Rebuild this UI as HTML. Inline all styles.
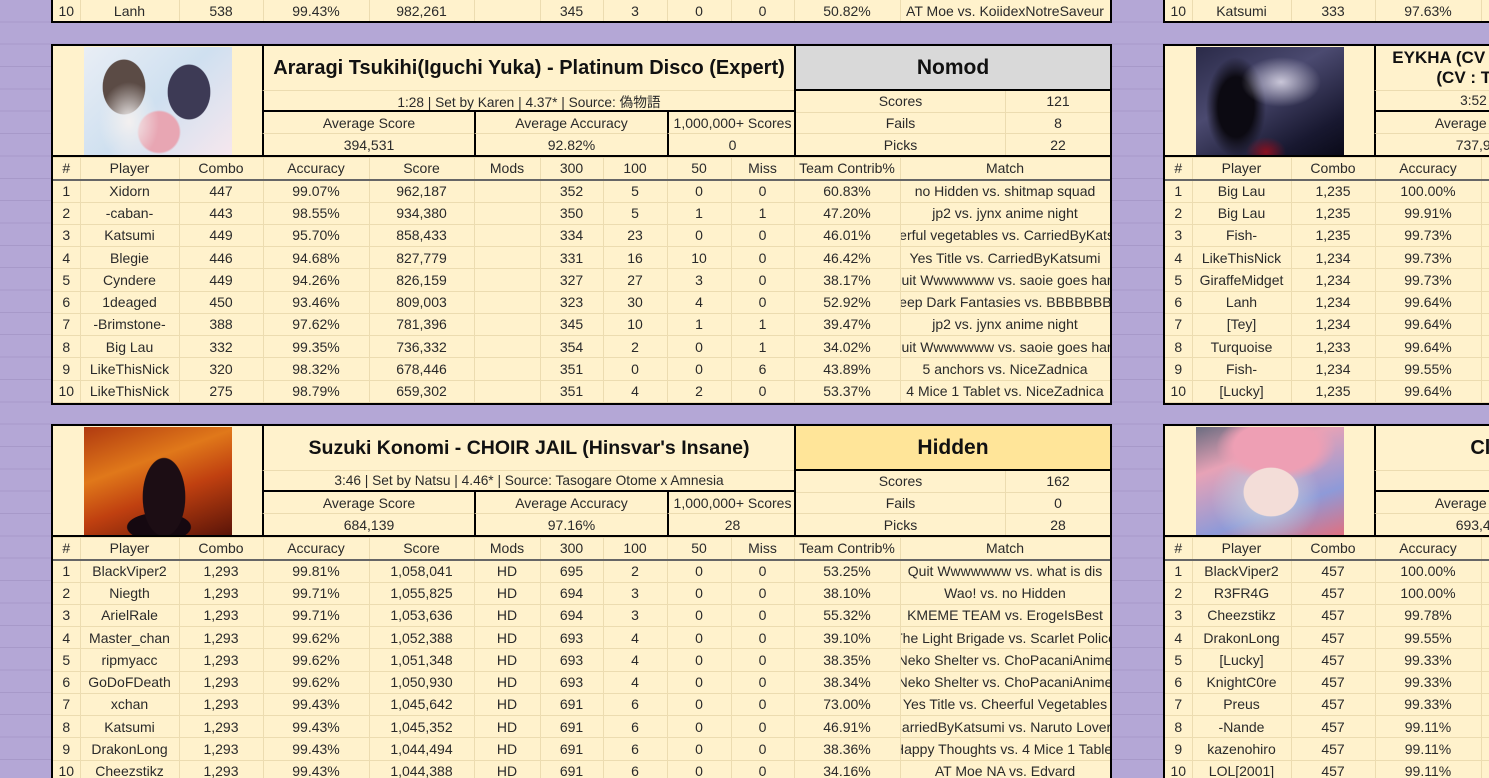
<!DOCTYPE html>
<html><head><meta charset="utf-8">
<style>
*{margin:0;padding:0}
html,body{width:1489px;height:778px;overflow:hidden}
body{position:relative;font-family:"Liberation Sans","Noto Sans CJK JP",sans-serif;color:#2a2a2a;font-size:14px;
background-color:#b4a7d6;background-image:repeating-linear-gradient(to bottom,transparent 0,transparent 21.35px,#a799c9 21.35px,#a799c9 22.35px);}
#w{position:absolute;left:0;top:0;width:1489px;height:778px;overflow:hidden}
.pn{position:absolute;border:2px solid #000;background:#fff2cc;box-sizing:border-box;width:1061px;height:361px;overflow:hidden}
.c{position:absolute;display:flex;align-items:center;justify-content:center;white-space:nowrap;overflow:hidden;box-sizing:border-box}
.ti{left:209px;top:0;width:534px;height:44px;border-left:2px solid #000;border-right:2px solid #000;font-weight:bold;font-size:20px;color:#111}
.sb{left:209px;top:44px;width:534px;height:22px;border-left:2px solid #000;border-right:2px solid #000;border-top:1px solid #ecdcb0;border-bottom:2px solid #000;font-size:13.7px}
.al{top:66px;height:22px;border-left:2px solid #000;border-bottom:1px solid #ecdcb0}
.av{top:88px;height:21px;border-left:2px solid #000}
.mh{left:743px;top:0;width:314px;height:45px;border-bottom:2px solid #000;font-weight:bold;font-size:21px;color:#111}
.sl{left:743px;width:210px;height:21.5px;border-bottom:1px solid #ecdcb0;border-right:1px solid #ecdcb0}
.sv{left:953px;width:104px;height:21.5px;border-bottom:1px solid #ecdcb0}
.ln{position:absolute;left:0;top:109px;width:1057px;height:2px;background:#000}
.im{position:absolute;left:31px;top:1px;width:148px;height:108px}
table{position:absolute;left:0;top:111px;width:1057px;border-collapse:collapse;table-layout:fixed}
tr{height:22.25px}
td{padding:0;border:1px solid #ecdcb0;text-align:center;white-space:nowrap;overflow:hidden;font-size:14px;line-height:18px}
tr.h td{border-bottom:2px solid #666}
td:first-child{border-left:none}
td div{display:flex;justify-content:center;white-space:nowrap}
.tp{position:absolute;background:#fff2cc;border:2px solid #000;border-top:none;box-sizing:border-box;height:24px;overflow:hidden}
</style></head><body><div id="w">

<div class="tp" style="left:51px;top:-1px;width:1061px">
<table style="top:0"><colgroup><col style="width:27px"><col style="width:99px"><col style="width:84px"><col style="width:106px"><col style="width:105px"><col style="width:66px"><col style="width:63px"><col style="width:64px"><col style="width:64px"><col style="width:63px"><col style="width:106px"><col style="width:210px"></colgroup>
<tr><td>10</td><td>Lanh</td><td>538</td><td>99.43%</td><td>982,261</td><td></td><td>345</td><td>3</td><td>0</td><td>0</td><td>50.82%</td><td><div>AT Moe vs. KoiidexNotreSaveur</div></td></tr></table></div>
<div class="tp" style="left:1163px;top:-1px;width:1061px">
<table style="top:0"><colgroup><col style="width:27px"><col style="width:99px"><col style="width:84px"><col style="width:106px"><col style="width:105px"><col style="width:66px"><col style="width:63px"><col style="width:64px"><col style="width:64px"><col style="width:63px"><col style="width:106px"><col style="width:210px"></colgroup>
<tr><td>10</td><td>Katsumi</td><td>333</td><td>97.63%</td><td></td><td></td><td></td><td></td><td></td><td></td><td></td><td></td></tr></table></div>

<div class="pn" style="left:51px;top:44px">
<div class="im" style="background:radial-gradient(ellipse 30px 40px at 45px 75px,#f3f0f0,transparent),radial-gradient(ellipse 35px 45px at 40px 40px,#5b4b45 60%,transparent 62%),radial-gradient(ellipse 35px 45px at 105px 45px,#3d3a55 60%,transparent 62%),radial-gradient(circle at 75px 85px,#e8a6b3 20px,transparent 22px),linear-gradient(135deg,#e9eef5,#cfe0f0 50%,#f6e7ee)"></div>
<div class="c ti">Araragi Tsukihi(Iguchi Yuka) - Platinum Disco (Expert)</div>
<div class="c sb">1:28 | Set by Karen | 4.37* | Source: 偽物語</div>
<div class="c al" style="left:209px;width:212px">Average Score</div>
<div class="c av" style="left:209px;width:212px">394,531</div>
<div class="c al" style="left:421px;width:193px">Average Accuracy</div>
<div class="c av" style="left:421px;width:193px">92.82%</div>
<div class="c al" style="left:614px;width:129px">1,000,000+ Scores</div>
<div class="c av" style="left:614px;width:129px">0</div>
<div class="c mh" style="background:#d9d9d9">Nomod</div>
<div class="c sl" style="top:45px">Scores</div><div class="c sv" style="top:45px">121</div>
<div class="c sl" style="top:66.5px">Fails</div><div class="c sv" style="top:66.5px">8</div>
<div class="c sl" style="top:88px;border-bottom:none">Picks</div><div class="c sv" style="top:88px;border-bottom:none">22</div>
<div style="position:absolute;left:741px;top:0;width:2px;height:110px;background:#000"></div>
<div class="ln"></div>
<table><colgroup><col style="width:27px"><col style="width:99px"><col style="width:84px"><col style="width:106px"><col style="width:105px"><col style="width:66px"><col style="width:63px"><col style="width:64px"><col style="width:64px"><col style="width:63px"><col style="width:106px"><col style="width:210px"></colgroup>
<tr class="h"><td>#</td><td>Player</td><td>Combo</td><td>Accuracy</td><td>Score</td><td>Mods</td><td>300</td><td>100</td><td>50</td><td>Miss</td><td>Team Contrib%</td><td>Match</td></tr>
<tr><td>1</td><td>Xidorn</td><td>447</td><td>99.07%</td><td>962,187</td><td></td><td>352</td><td>5</td><td>0</td><td>0</td><td>60.83%</td><td><div>no Hidden vs. shitmap squad</div></td></tr>
<tr><td>2</td><td>-caban-</td><td>443</td><td>98.55%</td><td>934,380</td><td></td><td>350</td><td>5</td><td>1</td><td>1</td><td>47.20%</td><td><div>jp2 vs. jynx anime night</div></td></tr>
<tr><td>3</td><td>Katsumi</td><td>449</td><td>95.70%</td><td>858,433</td><td></td><td>334</td><td>23</td><td>0</td><td>0</td><td>46.01%</td><td><div>Cheerful vegetables vs. CarriedByKatsumi</div></td></tr>
<tr><td>4</td><td>Blegie</td><td>446</td><td>94.68%</td><td>827,779</td><td></td><td>331</td><td>16</td><td>10</td><td>0</td><td>46.42%</td><td><div>Yes Title vs. CarriedByKatsumi</div></td></tr>
<tr><td>5</td><td>Cyndere</td><td>449</td><td>94.26%</td><td>826,159</td><td></td><td>327</td><td>27</td><td>3</td><td>0</td><td>38.17%</td><td><div>Quit Wwwwwww vs. saoie goes hard</div></td></tr>
<tr><td>6</td><td>1deaged</td><td>450</td><td>93.46%</td><td>809,003</td><td></td><td>323</td><td>30</td><td>4</td><td>0</td><td>52.92%</td><td><div>Deep Dark Fantasies vs. BBBBBBBB</div></td></tr>
<tr><td>7</td><td>-Brimstone-</td><td>388</td><td>97.62%</td><td>781,396</td><td></td><td>345</td><td>10</td><td>1</td><td>1</td><td>39.47%</td><td><div>jp2 vs. jynx anime night</div></td></tr>
<tr><td>8</td><td>Big Lau</td><td>332</td><td>99.35%</td><td>736,332</td><td></td><td>354</td><td>2</td><td>0</td><td>1</td><td>34.02%</td><td><div>Quit Wwwwwww vs. saoie goes hard</div></td></tr>
<tr><td>9</td><td>LikeThisNick</td><td>320</td><td>98.32%</td><td>678,446</td><td></td><td>351</td><td>0</td><td>0</td><td>6</td><td>43.89%</td><td><div>5 anchors vs. NiceZadnica</div></td></tr>
<tr><td>10</td><td>LikeThisNick</td><td>275</td><td>98.79%</td><td>659,302</td><td></td><td>351</td><td>4</td><td>2</td><td>0</td><td>53.37%</td><td><div>4 Mice 1 Tablet vs. NiceZadnica</div></td></tr>
</table></div>

<div class="pn" style="left:51px;top:424px;height:400px">
<div class="im" style="background:radial-gradient(ellipse 30px 55px at 80px 70px,#1c0d14 70%,transparent 72%),radial-gradient(ellipse 45px 20px at 75px 100px,#150810 70%,transparent 72%),linear-gradient(160deg,#b03a10,#e0781a 35%,#c04010 60%,#5a1408)"></div>
<div class="c ti" style="font-size:19.5px">Suzuki Konomi - CHOIR JAIL (Hinsvar's Insane)</div>
<div class="c sb">3:46 | Set by Natsu | 4.46* | Source: Tasogare Otome x Amnesia</div>
<div class="c al" style="left:209px;width:212px">Average Score</div>
<div class="c av" style="left:209px;width:212px">684,139</div>
<div class="c al" style="left:421px;width:193px">Average Accuracy</div>
<div class="c av" style="left:421px;width:193px">97.16%</div>
<div class="c al" style="left:614px;width:129px">1,000,000+ Scores</div>
<div class="c av" style="left:614px;width:129px">28</div>
<div class="c mh" style="background:#ffe599">Hidden</div>
<div class="c sl" style="top:45px">Scores</div><div class="c sv" style="top:45px">162</div>
<div class="c sl" style="top:66.5px">Fails</div><div class="c sv" style="top:66.5px">0</div>
<div class="c sl" style="top:88px;border-bottom:none">Picks</div><div class="c sv" style="top:88px;border-bottom:none">28</div>
<div style="position:absolute;left:741px;top:0;width:2px;height:110px;background:#000"></div>
<div class="ln"></div>
<table><colgroup><col style="width:27px"><col style="width:99px"><col style="width:84px"><col style="width:106px"><col style="width:105px"><col style="width:66px"><col style="width:63px"><col style="width:64px"><col style="width:64px"><col style="width:63px"><col style="width:106px"><col style="width:210px"></colgroup>
<tr class="h"><td>#</td><td>Player</td><td>Combo</td><td>Accuracy</td><td>Score</td><td>Mods</td><td>300</td><td>100</td><td>50</td><td>Miss</td><td>Team Contrib%</td><td>Match</td></tr>
<tr><td>1</td><td>BlackViper2</td><td>1,293</td><td>99.81%</td><td>1,058,041</td><td>HD</td><td>695</td><td>2</td><td>0</td><td>0</td><td>53.25%</td><td><div>Quit Wwwwwww vs. what is dis</div></td></tr>
<tr><td>2</td><td>Niegth</td><td>1,293</td><td>99.71%</td><td>1,055,825</td><td>HD</td><td>694</td><td>3</td><td>0</td><td>0</td><td>38.10%</td><td><div>Wao! vs. no Hidden</div></td></tr>
<tr><td>3</td><td>ArielRale</td><td>1,293</td><td>99.71%</td><td>1,053,636</td><td>HD</td><td>694</td><td>3</td><td>0</td><td>0</td><td>55.32%</td><td><div>KMEME TEAM vs. ErogeIsBest</div></td></tr>
<tr><td>4</td><td>Master_chan</td><td>1,293</td><td>99.62%</td><td>1,052,388</td><td>HD</td><td>693</td><td>4</td><td>0</td><td>0</td><td>39.10%</td><td><div>The Light Brigade vs. Scarlet Police</div></td></tr>
<tr><td>5</td><td>ripmyacc</td><td>1,293</td><td>99.62%</td><td>1,051,348</td><td>HD</td><td>693</td><td>4</td><td>0</td><td>0</td><td>38.35%</td><td><div>Neko Shelter vs. ChoPacaniAnime</div></td></tr>
<tr><td>6</td><td>GoDoFDeath</td><td>1,293</td><td>99.62%</td><td>1,050,930</td><td>HD</td><td>693</td><td>4</td><td>0</td><td>0</td><td>38.34%</td><td><div>Neko Shelter vs. ChoPacaniAnime</div></td></tr>
<tr><td>7</td><td>xchan</td><td>1,293</td><td>99.43%</td><td>1,045,642</td><td>HD</td><td>691</td><td>6</td><td>0</td><td>0</td><td>73.00%</td><td><div>Yes Title vs. Cheerful Vegetables</div></td></tr>
<tr><td>8</td><td>Katsumi</td><td>1,293</td><td>99.43%</td><td>1,045,352</td><td>HD</td><td>691</td><td>6</td><td>0</td><td>0</td><td>46.91%</td><td><div>CarriedByKatsumi vs. Naruto Lovers</div></td></tr>
<tr><td>9</td><td>DrakonLong</td><td>1,293</td><td>99.43%</td><td>1,044,494</td><td>HD</td><td>691</td><td>6</td><td>0</td><td>0</td><td>38.36%</td><td><div>Happy Thoughts vs. 4 Mice 1 Tablet</div></td></tr>
<tr><td>10</td><td>Cheezstikz</td><td>1,293</td><td>99.43%</td><td>1,044,388</td><td>HD</td><td>691</td><td>6</td><td>0</td><td>0</td><td>34.16%</td><td><div>AT Moe NA vs. Edvard</div></td></tr>
</table></div>

<div class="pn" style="left:1163px;top:44px">
<div class="im" style="background:radial-gradient(ellipse 40px 25px at 85px 35px,#c9c6d8,transparent),radial-gradient(ellipse 20px 15px at 70px 105px,#8a1020,transparent),radial-gradient(ellipse 30px 50px at 40px 60px,#0c0a12 60%,transparent),linear-gradient(150deg,#2a2a48,#4b4a70 40%,#181830 80%,#0a0a18)"></div>
<div class="c ti" style="font-size:17px;height:22px;align-items:flex-end;border-right:none">EYKHA (CV : Kitamura Eri) &amp; Alice (CV : Hanazawa Kana) feat.</div>
<div class="c ti" style="font-size:17px;top:22px;height:22px;align-items:flex-start;border-right:none">(CV : Tamura Yukari) - Crimson Bullet (Extra Stage)</div>
<div class="c sb" style="border-right:none">3:52 | Set by Someone | 5.21* | Source: Unknown Title Here</div>
<div class="c al" style="left:209px;width:212px">Average Score</div>
<div class="c av" style="left:209px;width:212px">737,912</div>
<div class="ln"></div>
<table><colgroup><col style="width:27px"><col style="width:99px"><col style="width:84px"><col style="width:106px"><col style="width:105px"><col style="width:66px"><col style="width:63px"><col style="width:64px"><col style="width:64px"><col style="width:63px"><col style="width:106px"><col style="width:210px"></colgroup>
<tr class="h"><td>#</td><td>Player</td><td>Combo</td><td>Accuracy</td><td>Score</td><td></td><td></td><td></td><td></td><td></td><td></td><td></td></tr>
<tr><td>1</td><td>Big Lau</td><td>1,235</td><td>100.00%</td><td></td><td></td><td></td><td></td><td></td><td></td><td></td><td></td></tr>
<tr><td>2</td><td>Big Lau</td><td>1,235</td><td>99.91%</td><td></td><td></td><td></td><td></td><td></td><td></td><td></td><td></td></tr>
<tr><td>3</td><td>Fish-</td><td>1,235</td><td>99.73%</td><td></td><td></td><td></td><td></td><td></td><td></td><td></td><td></td></tr>
<tr><td>4</td><td>LikeThisNick</td><td>1,234</td><td>99.73%</td><td></td><td></td><td></td><td></td><td></td><td></td><td></td><td></td></tr>
<tr><td>5</td><td>GiraffeMidget</td><td>1,234</td><td>99.73%</td><td></td><td></td><td></td><td></td><td></td><td></td><td></td><td></td></tr>
<tr><td>6</td><td>Lanh</td><td>1,234</td><td>99.64%</td><td></td><td></td><td></td><td></td><td></td><td></td><td></td><td></td></tr>
<tr><td>7</td><td>[Tey]</td><td>1,234</td><td>99.64%</td><td></td><td></td><td></td><td></td><td></td><td></td><td></td><td></td></tr>
<tr><td>8</td><td>Turquoise</td><td>1,233</td><td>99.64%</td><td></td><td></td><td></td><td></td><td></td><td></td><td></td><td></td></tr>
<tr><td>9</td><td>Fish-</td><td>1,234</td><td>99.55%</td><td></td><td></td><td></td><td></td><td></td><td></td><td></td><td></td></tr>
<tr><td>10</td><td>[Lucky]</td><td>1,235</td><td>99.64%</td><td></td><td></td><td></td><td></td><td></td><td></td><td></td><td></td></tr>
</table></div>

<div class="pn" style="left:1163px;top:424px;height:400px">
<div class="im" style="background:radial-gradient(ellipse 45px 40px at 75px 65px,#f3ddd8 60%,transparent 62%),radial-gradient(ellipse 60px 35px at 80px 20px,#ee9fb4 70%,transparent),radial-gradient(ellipse 55px 50px at 70px 70px,#c8d2de,transparent),linear-gradient(160deg,#6a6c80,#e7a2b6 30%,#8e9ad8 70%,#e07080)"></div>
<div class="c ti" style="font-size:20px;border-right:none">ClariS - Hitorigoto (TV Size) [Insane]</div>
<div class="c sb" style="border-right:none">1:27 | Set by Someone | 4.8*</div>
<div class="c al" style="left:209px;width:212px">Average Score</div>
<div class="c av" style="left:209px;width:212px">693,412</div>
<div class="ln"></div>
<table><colgroup><col style="width:27px"><col style="width:99px"><col style="width:84px"><col style="width:106px"><col style="width:105px"><col style="width:66px"><col style="width:63px"><col style="width:64px"><col style="width:64px"><col style="width:63px"><col style="width:106px"><col style="width:210px"></colgroup>
<tr class="h"><td>#</td><td>Player</td><td>Combo</td><td>Accuracy</td><td>Score</td><td></td><td></td><td></td><td></td><td></td><td></td><td></td></tr>
<tr><td>1</td><td>BlackViper2</td><td>457</td><td>100.00%</td><td></td><td></td><td></td><td></td><td></td><td></td><td></td><td></td></tr>
<tr><td>2</td><td>R3FR4G</td><td>457</td><td>100.00%</td><td></td><td></td><td></td><td></td><td></td><td></td><td></td><td></td></tr>
<tr><td>3</td><td>Cheezstikz</td><td>457</td><td>99.78%</td><td></td><td></td><td></td><td></td><td></td><td></td><td></td><td></td></tr>
<tr><td>4</td><td>DrakonLong</td><td>457</td><td>99.55%</td><td></td><td></td><td></td><td></td><td></td><td></td><td></td><td></td></tr>
<tr><td>5</td><td>[Lucky]</td><td>457</td><td>99.33%</td><td></td><td></td><td></td><td></td><td></td><td></td><td></td><td></td></tr>
<tr><td>6</td><td>KnightC0re</td><td>457</td><td>99.33%</td><td></td><td></td><td></td><td></td><td></td><td></td><td></td><td></td></tr>
<tr><td>7</td><td>Preus</td><td>457</td><td>99.33%</td><td></td><td></td><td></td><td></td><td></td><td></td><td></td><td></td></tr>
<tr><td>8</td><td>-Nande</td><td>457</td><td>99.11%</td><td></td><td></td><td></td><td></td><td></td><td></td><td></td><td></td></tr>
<tr><td>9</td><td>kazenohiro</td><td>457</td><td>99.11%</td><td></td><td></td><td></td><td></td><td></td><td></td><td></td><td></td></tr>
<tr><td>10</td><td>LOL[2001]</td><td>457</td><td>99.11%</td><td></td><td></td><td></td><td></td><td></td><td></td><td></td><td></td></tr>
</table></div>
</div></body></html>
